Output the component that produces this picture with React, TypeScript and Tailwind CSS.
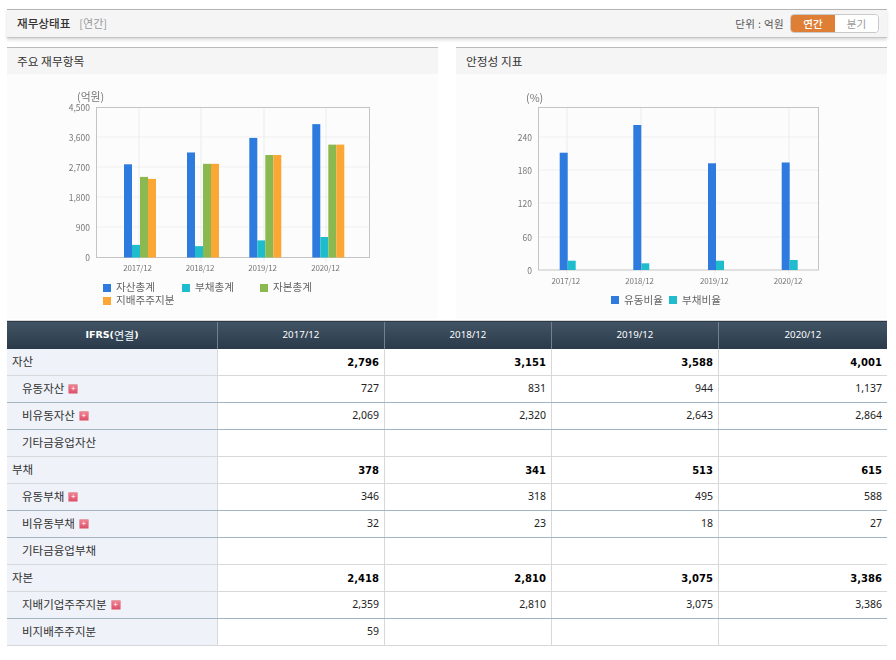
import React from "react";

const KR = "font-['Noto_Sans_CJK_KR','Noto_Sans',sans-serif]";
const NUM = "font-['Noto_Sans',sans-serif]";
const NUM_BOLD = "font-['DejaVu_Sans',sans-serif]";

const BLUE = "#2e7bdf";
const TEAL = "#1fbccd";
const GREEN = "#8cb94f";
const ORANGE = "#fba735";

const years = ["2017/12", "2018/12", "2019/12", "2020/12"];

type Row = {
  label: string;
  level: 0 | 1;
  plus?: boolean;
  values: string[];
  line: "light" | "dark";
};

const rows: Row[] = [
  { label: "자산", level: 0, values: ["2,796", "3,151", "3,588", "4,001"], line: "light" },
  { label: "유동자산", level: 1, plus: true, values: ["727", "831", "944", "1,137"], line: "dark" },
  { label: "비유동자산", level: 1, plus: true, values: ["2,069", "2,320", "2,643", "2,864"], line: "dark" },
  { label: "기타금융업자산", level: 1, values: ["", "", "", ""], line: "light" },
  { label: "부채", level: 0, values: ["378", "341", "513", "615"], line: "light" },
  { label: "유동부채", level: 1, plus: true, values: ["346", "318", "495", "588"], line: "dark" },
  { label: "비유동부채", level: 1, plus: true, values: ["32", "23", "18", "27"], line: "dark" },
  { label: "기타금융업부채", level: 1, values: ["", "", "", ""], line: "light" },
  { label: "자본", level: 0, values: ["2,418", "2,810", "3,075", "3,386"], line: "light" },
  { label: "지배기업주주지분", level: 1, plus: true, values: ["2,359", "2,810", "3,075", "3,386"], line: "dark" },
  { label: "비지배주주지분", level: 1, values: ["59", "", "", ""], line: "light" },
];

function AssetChart() {
  const base = 257.5;
  const xs = [124, 187, 249.3, 312.3];
  const series = [
    { color: BLUE, data: [2796, 3151, 3588, 4001] },
    { color: TEAL, data: [378, 341, 513, 615] },
    { color: GREEN, data: [2418, 2810, 3075, 3386] },
    { color: ORANGE, data: [2359, 2810, 3075, 3386] },
  ];
  const legend = [
    { x: 103, y: 287, color: BLUE, label: "자산총계" },
    { x: 182, y: 287, color: TEAL, label: "부채총계" },
    { x: 260, y: 287, color: GREEN, label: "자본총계" },
    { x: 103, y: 300, color: ORANGE, label: "지배주주지분" },
  ];
  return (
    <svg width="431" height="245" viewBox="7 74 431 245" className="block blur-[0.3px]">
      <text x="77" y="101" fontSize="10.8" fill="#777">(억원)</text>
      {[137, 167, 197, 227].map((y) => (
        <line key={y} x1="97" x2="369" y1={y} y2={y} stroke="#f0f0f0" />
      ))}
      {[139, 201, 264, 326].map((x) => (
        <line key={x} x1={x} x2={x} y1="107" y2="262" stroke="#ececec" />
      ))}
      <rect x="96.5" y="107.5" width="273" height="150" fill="none" stroke="#c4c4c4" />
      {["4,500", "3,600", "2,700", "1,800", "900", "0"].map((t, i) => (
        <text key={t} x="90" y={111 + i * 30} textAnchor="end" fontSize="8.5" fill="#777">{t}</text>
      ))}
      {xs.map((x, i) =>
        series.map((s, j) => (
          <rect key={s.color} x={x + j * 8} y={base - s.data[i] / 30} width="8" height={s.data[i] / 30} fill={s.color} />
        ))
      )}
      {years.map((y, i) => (
        <text key={y} x={[137.5, 200, 262.5, 325.5][i]} y="271" textAnchor="middle" fontSize="8" letterSpacing="-0.2" fill="#777">{y}</text>
      ))}
      {legend.map((l) => (
        <g key={l.label}>
          <rect x={l.x} y={l.y - 3} width="8" height="8" fill={l.color} />
          <text x={l.x + 13} y={l.y + 4} fontSize="10.6" fill="#666">{l.label}</text>
        </g>
      ))}
    </svg>
  );
}

function RatioChart() {
  const base = 270;
  const xs = [559.7, 633.3, 708, 781.7];
  const blue = [117.3, 145, 106.7, 107.5];
  const teal = [9.3, 6.7, 9.3, 10];
  return (
    <svg width="431" height="245" viewBox="456 74 431 245" className="block blur-[0.3px]">
      <text x="526" y="102" fontSize="10.8" fill="#777">(%)</text>
      {[137, 170, 203, 237].map((y) => (
        <line key={y} x1="539" x2="818" y1={y} y2={y} stroke="#f0f0f0" />
      ))}
      {[567, 641, 715, 789].map((x) => (
        <line key={x} x1={x} x2={x} y1="107" y2="274" stroke="#ececec" />
      ))}
      <rect x="538.5" y="107.5" width="280" height="162.5" fill="none" stroke="#c4c4c4" />
      {["240", "180", "120", "60", "0"].map((t, i) => (
        <text key={t} x="532" y={[141, 174, 207, 241, 274][i]} textAnchor="end" fontSize="8.5" fill="#777">{t}</text>
      ))}
      {xs.map((x, i) => (
        <g key={x}>
          <rect x={x} y={base - blue[i]} width="8" height={blue[i]} fill={BLUE} />
          <rect x={x + 8} y={base - teal[i]} width="8" height={teal[i]} fill={TEAL} />
        </g>
      ))}
      {years.map((y, i) => (
        <text key={y} x={[565.7, 639.5, 714.3, 788][i]} y="284" textAnchor="middle" fontSize="8" letterSpacing="-0.2" fill="#777">{y}</text>
      ))}
      <rect x="611" y="296" width="8" height="8" fill={BLUE} />
      <text x="624" y="304" fontSize="10.6" fill="#666">유동비율</text>
      <rect x="669" y="296" width="8" height="8" fill={TEAL} />
      <text x="682" y="304" fontSize="10.6" fill="#666">부채비율</text>
    </svg>
  );
}

function PlusIcon() {
  return (
    <span className="ml-[4px] flex h-[10px] w-[10px] items-center justify-center rounded-[1px] bg-gradient-to-b from-[#f0808f] to-[#dd4f6c] border border-[#e3a0aa]">
      <span className="text-[7px] leading-none font-bold text-[#ffe4ea]">+</span>
    </span>
  );
}

export default function App() {
  return (
    <div className={`w-[896px] h-[660px] overflow-hidden bg-white pl-[7px] pt-[9px] ${KR}`}>
      <div className="w-[880px]">
        {/* 상단 타이틀 */}
        <div className="flex h-[29px] items-center justify-between border-t border-t-[#b5b5b5] border-b border-b-[#c4c4c4] bg-[#f5f5f5] pl-[10px] pr-[8px] shadow-[0_2px_3px_rgba(0,0,0,0.15)]">
          <div className="flex items-center">
            <span className="text-[11.6px] font-medium text-[#333]">재무상태표</span>
            <span className="ml-[9px] text-[11px] text-[#999]">[연간]</span>
          </div>
          <div className="flex items-center">
            <span className="mr-[6px] text-[10.5px] tracking-[0.35px] text-[#555]">단위 : 억원</span>
            <div className="flex h-[19px] w-[89px] overflow-hidden rounded-[4px] border border-[#c9c9c9]">
              <div className="flex w-[44px] items-center justify-center bg-[#de7f35] text-[10.5px] font-medium text-white">연간</div>
              <div className="flex flex-1 items-center justify-center bg-white text-[10.5px] text-[#999]">분기</div>
            </div>
          </div>
        </div>

        {/* 차트 */}
        <div className="mt-[9px] flex justify-between">
          <div className="w-[431px]">
            <div className="flex h-[27px] items-center border-t border-t-[#bbb] bg-[#f5f5f5] pl-[10px] text-[11.7px] text-[#333]">주요 재무항목</div>
            <div className="bg-[#fcfcfc]"><AssetChart /></div>
          </div>
          <div className="w-[431px]">
            <div className="flex h-[27px] items-center border-t border-t-[#bbb] bg-[#f5f5f5] pl-[10px] text-[11.7px] text-[#333]">안정성 지표</div>
            <div className="bg-[#fcfcfc]"><RatioChart /></div>
          </div>
        </div>

        {/* 테이블 */}
        <div className="mt-[1px] border-t border-t-[#d5d5d5]">
          <div className="grid h-[28px] grid-cols-[211px_167px_167px_167px_168px] bg-gradient-to-b from-[#425464] to-[#2a3a4b] text-white border-t border-t-[#2a3a4b]">
            <div className="flex items-center justify-center border-r border-r-[#72818e] pb-[1px] text-[11px] font-bold">
              <span className={`${NUM_BOLD} text-[9.5px]`}>IFRS(</span>
              <span className="font-medium text-[#dfe4e8]">연결</span>
              <span className={`${NUM_BOLD} text-[9.5px]`}>)</span>
            </div>
            {years.map((y, i) => (
              <div key={y} className={`flex items-center justify-center pb-[1px] text-[9.7px] ${NUM} ${i < 3 ? "border-r border-r-[#72818e]" : ""}`}>{y}</div>
            ))}
          </div>
          {rows.map((r) => (
            <div
              key={r.label}
              className={`grid h-[27px] grid-cols-[211px_167px_167px_167px_168px] border-b ${r.line === "dark" ? "border-b-[#a3b4c0]" : "border-b-[#d6d8da]"}`}
            >
              <div className={`flex items-center border-r border-r-[#d6d8da] bg-[#eff2f8] pb-[1px] text-[11.5px] text-[#333] ${r.level === 0 ? "pl-[5px]" : "pl-[15px]"}`}>
                {r.label}
                {r.plus && <PlusIcon />}
              </div>
              {r.values.map((v, i) => (
                <div
                  key={i}
                  className={`flex items-center justify-end pr-[5px] ${r.level === 0 ? `${NUM_BOLD} text-[10px] font-bold text-black` : `${NUM} text-[10.5px] text-[#222]`} ${i < 3 ? "border-r border-r-[#d6d8da]" : ""}`}
                >
                  {v}
                </div>
              ))}
            </div>
          ))}
        </div>
      </div>
    </div>
  );
}
